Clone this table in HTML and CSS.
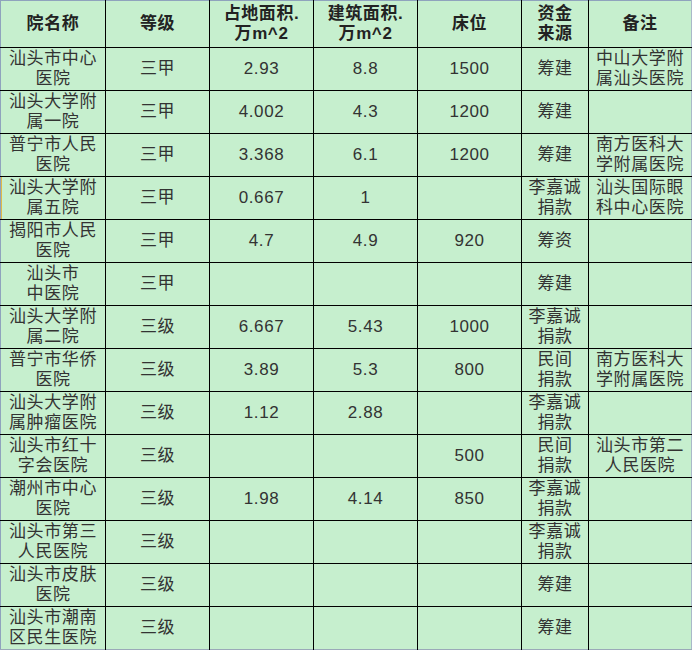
FILE: index.html
```html
<!DOCTYPE html>
<html lang="zh">
<head>
<meta charset="utf-8">
<title>汕头医院</title>
<link rel="stylesheet" href="styles.css">
</head>
<body>
<table class="grid">
  <colgroup>
    <col class="c-name"><col class="c-mid"><col class="c-mid"><col class="c-mid"><col class="c-mid"><col class="c-fund"><col class="c-note">
  </colgroup>
  <thead>
    <tr class="head">
      <th>院名称</th><th>等级</th><th>占地面积.<br>万m^2</th><th>建筑面积.<br>万m^2</th><th>床位</th><th>资金<br>来源</th><th>备注</th>
    </tr>
  </thead>
  <tbody>
    <tr><td>汕头市中心<br>医院</td><td>三甲</td><td>2.93</td><td>8.8</td><td>1500</td><td>筹建</td><td>中山大学附<br>属汕头医院</td></tr>
    <tr><td>汕头大学附<br>属一院</td><td>三甲</td><td>4.002</td><td>4.3</td><td>1200</td><td>筹建</td><td></td></tr>
    <tr><td>普宁市人民<br>医院</td><td>三甲</td><td>3.368</td><td>6.1</td><td>1200</td><td>筹建</td><td>南方医科大<br>学附属医院</td></tr>
    <tr><td class="mark">汕头大学附<br>属五院</td><td>三甲</td><td>0.667</td><td>1</td><td></td><td>李嘉诚<br>捐款</td><td>汕头国际眼<br>科中心医院</td></tr>
    <tr><td>揭阳市人民<br>医院</td><td>三甲</td><td>4.7</td><td>4.9</td><td>920</td><td>筹资</td><td></td></tr>
    <tr><td>汕头市<br>中医院</td><td>三甲</td><td></td><td></td><td></td><td>筹建</td><td></td></tr>
    <tr><td>汕头大学附<br>属二院</td><td>三级</td><td>6.667</td><td>5.43</td><td>1000</td><td>李嘉诚<br>捐款</td><td></td></tr>
    <tr><td>普宁市华侨<br>医院</td><td>三级</td><td>3.89</td><td>5.3</td><td>800</td><td>民间<br>捐款</td><td>南方医科大<br>学附属医院</td></tr>
    <tr><td>汕头大学附<br>属肿瘤医院</td><td>三级</td><td>1.12</td><td>2.88</td><td></td><td>李嘉诚<br>捐款</td><td></td></tr>
    <tr><td>汕头市红十<br>字会医院</td><td>三级</td><td></td><td></td><td>500</td><td>民间<br>捐款</td><td>汕头市第二<br>人民医院</td></tr>
    <tr><td>潮州市中心<br>医院</td><td>三级</td><td>1.98</td><td>4.14</td><td>850</td><td>李嘉诚<br>捐款</td><td></td></tr>
    <tr><td>汕头市第三<br>人民医院</td><td>三级</td><td></td><td></td><td></td><td>李嘉诚<br>捐款</td><td></td></tr>
    <tr><td>汕头市皮肤<br>医院</td><td>三级</td><td></td><td></td><td></td><td>筹建</td><td></td></tr>
    <tr><td>汕头市潮南<br>区民生医院</td><td>三级</td><td></td><td></td><td></td><td>筹建</td><td></td></tr>
  </tbody>
</table>
</body>
</html>
```

FILE: styles.css
```css
html, body {
  margin: 0;
  padding: 0;
  background: #ffffff;
}

.grid {
  border-collapse: collapse;
  table-layout: fixed;
  width: 691px;
  background: #c6efce;
  font-family: "Liberation Sans", "Noto Sans CJK SC", sans-serif;
  font-size: 17px;
  line-height: 20px;
  color: #333333;
  border-top: 1px solid #8fa3bd;
  border-left: 1px solid #8fa3bd;
  border-right: 1px solid #a9b8c9;
  border-bottom: 1px solid #9aa9b8;
}

.c-name { width: 105px; }
.c-mid { width: 104px; }
.c-fund { width: 67px; }
.c-note { width: 103px; }

.grid th,
.grid td {
  border: 1px solid #000000;
  padding: 0;
  text-align: center;
  vertical-align: middle;
  letter-spacing: 0.6px;
  white-space: nowrap;
  overflow: hidden;
}

.grid th {
  font-weight: bold;
  color: #222222;
}

.grid tr.head th {
  border-top: none;
  height: 46px;
}

.grid tbody tr {
  height: 43px;
}

.grid tr > :first-child {
  border-left: none;
}

.grid tr > :last-child {
  border-right: none;
}

.grid tbody tr:last-child td {
  border-bottom: none;
}

.grid td.mark {
  box-shadow: inset 1px 0 0 #e0b84a;
}
```
